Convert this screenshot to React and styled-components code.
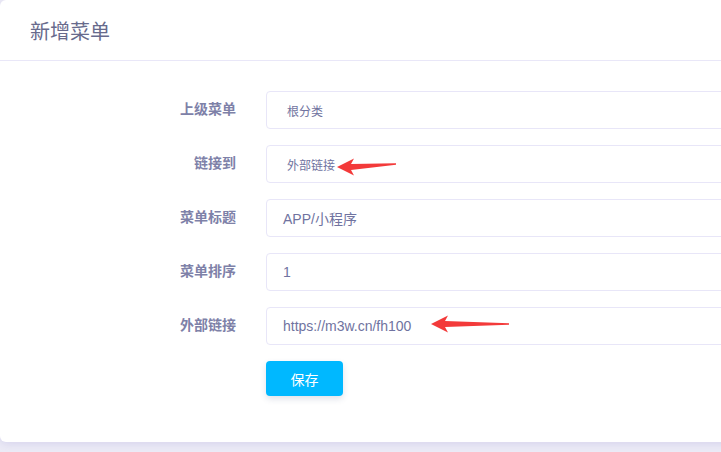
import React from "react";
import styled, { createGlobalStyle } from "styled-components";

const Global = createGlobalStyle`
  html, body { margin: 0; padding: 0; background: #edecf7; }
  body { font-family: "Liberation Sans", "Noto Sans CJK SC", sans-serif; overflow: hidden; }
`;

const Page = styled.div`
  width: 721px;
  height: 452px;
  overflow: hidden;
  background: #ecebf6;
`;

const Card = styled.div`
  width: 780px;
  background: #fff;
  border-radius: 6px;
  box-shadow: 0 2px 8px rgba(150, 145, 210, 0.25);
  padding-bottom: 46px;
`;

const Header = styled.div`
  height: 60px;
  padding: 0 30px;
  display: flex;
  align-items: center;
  border-bottom: 1px solid #e9e7f8;
  font-size: 20px;
  color: #676a8c;
  font-family: "Noto Sans CJK SC", sans-serif;
`;

const Form = styled.div`
  padding-top: 30px;
  display: flex;
  flex-direction: column;
  gap: 16px;
`;

const Row = styled.div`
  display: flex;
  align-items: center;
  gap: 30px;
`;

const Label = styled.div`
  width: 236px;
  flex: none;
  text-align: right;
  font-size: 14px;
  font-weight: bold;
  color: #7e81a8;
  font-family: "Noto Sans CJK SC", sans-serif;
  margin-top: -5px;
`;

const Field = styled.div`
  position: relative;
  flex: 1;
  height: 36px;
  border: 1px solid #e8e6f8;
  border-radius: 4px;
  display: flex;
  align-items: center;
  padding-left: ${(p) => (p.$select ? "20px" : "16px")};
  font-size: ${(p) => (p.$select ? "12px" : "14px")};
  color: #7073a0;
  font-family: "Liberation Sans", "Noto Sans CJK SC", sans-serif;
`;

const Arrow = styled.svg`
  position: absolute;
  left: ${(p) => p.$x}px;
  top: ${(p) => p.$y}px;
`;

const Spacer = styled.div`
  width: 236px;
  flex: none;
`;

const Button = styled.button`
  width: 77px;
  height: 35px;
  border: none;
  border-radius: 4px;
  background: #00b8ff;
  color: #fff;
  font-size: 14px;
  font-family: "Noto Sans CJK SC", sans-serif;
  box-shadow: 0 3px 6px rgba(40, 60, 110, 0.15);
  cursor: pointer;
`;

function RedArrow({ x, y, w, h, tailY }) {
  const c = h / 2;
  const pts = `0,${c} 17,0.5 14,${c - 3} ${w},${tailY - 0.8} ${w},${tailY + 0.8} 14,${c + 3} 17,${h - 0.5}`;
  return (
    <Arrow $x={x} $y={y} width={w} height={h} viewBox={`0 0 ${w} ${h}`}>
      <polygon points={pts} fill="#f33a3a" />
    </Arrow>
  );
}

export default function App() {
  return (
    <Page>
      <Global />
      <Card>
        <Header>新增菜单</Header>
        <Form>
          <Row>
            <Label>上级菜单</Label>
            <Field $select>根分类</Field>
          </Row>
          <Row>
            <Label>链接到</Label>
            <Field $select>
              外部链接
              <RedArrow x={70} y={12} w={59} h={18} tailY={6} />
            </Field>
          </Row>
          <Row>
            <Label>菜单标题</Label>
            <Field>APP/小程序</Field>
          </Row>
          <Row>
            <Label>菜单排序</Label>
            <Field>1</Field>
          </Row>
          <Row>
            <Label>外部链接</Label>
            <Field>
              https://m3w.cn/fh100
              <RedArrow x={164} y={7} w={78} h={18} tailY={9} />
            </Field>
          </Row>
          <Row>
            <Spacer />
            <Button>保存</Button>
          </Row>
        </Form>
      </Card>
    </Page>
  );
}
